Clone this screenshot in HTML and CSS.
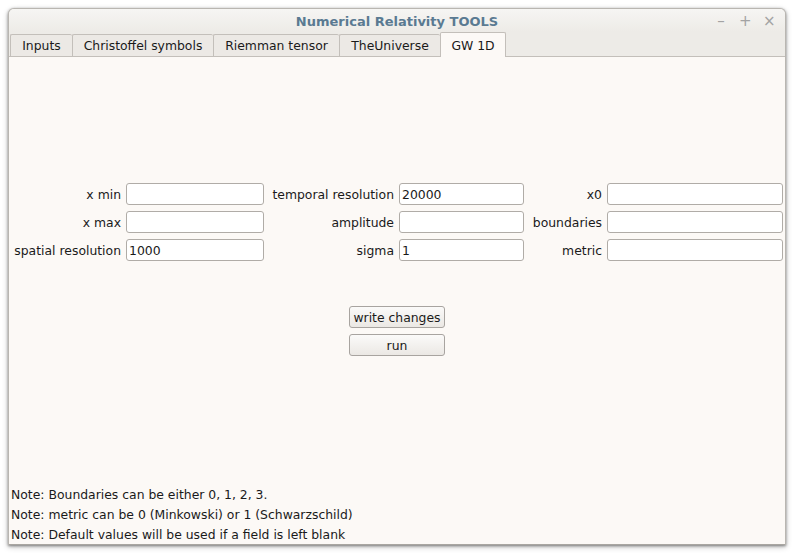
FILE: index.html
```html
<!DOCTYPE html>
<html>
<head>
<meta charset="utf-8">
<link rel="stylesheet" href="styles.css">
</head>
<body>
<div class="window">
  <div class="titlebar">
    <div class="title">Numerical Relativity TOOLS</div>
    <div class="controls">
      <span class="ctl">&#8211;</span>
      <span class="ctl">+</span>
      <span class="ctl">&#215;</span>
    </div>
  </div>
  <div class="tabs">
    <div class="tab t1">Inputs</div>
    <div class="tab t2">Christoffel symbols</div>
    <div class="tab t3">Riemman tensor</div>
    <div class="tab t4">TheUniverse</div>
    <div class="tab active t5">GW 1D</div>
  </div>
  <div class="content">
    <div class="form">
      <label class="lbl">x min</label><input class="field" type="text" value="">
      <label class="lbl">temporal resolution</label><input class="field" type="text" value="20000">
      <label class="lbl">x0</label><input class="field" type="text" value="">
      <label class="lbl">x max</label><input class="field" type="text" value="">
      <label class="lbl">amplitude</label><input class="field" type="text" value="">
      <label class="lbl">boundaries</label><input class="field" type="text" value="">
      <label class="lbl">spatial resolution</label><input class="field" type="text" value="1000">
      <label class="lbl">sigma</label><input class="field" type="text" value="1">
      <label class="lbl">metric</label><input class="field" type="text" value="">
    </div>
    <div class="buttons">
      <button class="btn">write changes</button>
      <button class="btn">run</button>
    </div>
    <div class="notes">
      <div class="note">Note: Boundaries can be either 0, 1, 2, 3.</div>
      <div class="note">Note: metric can be 0 (Minkowski) or 1 (Schwarzschild)</div>
      <div class="note">Note: Default values will be used if a field is left blank</div>
    </div>
  </div>
</div>
</body>
</html>
```
FILE: styles.css
```css
html, body {
  margin: 0;
  padding: 0;
  background: #ffffff;
}
body {
  font-family: "DejaVu Sans", sans-serif;
  font-size: 12.4px;
  color: #2e3436;
  padding: 8px 0 0 8px;
  width: 797px;
  height: 556px;
  box-sizing: border-box;
}
.window {
  width: 778px;
  height: 537px;
  display: flex;
  flex-direction: column;
  border-radius: 6px 6px 0 0;
  background: #edebe7;
  box-shadow: 0 1px 3px rgba(0,0,0,0.45), 0 2px 6px rgba(0,0,0,0.2);
  border: 1px solid #b9b6b1;
  border-bottom: none;
  box-sizing: border-box;
  overflow: hidden;
}
.titlebar {
  height: 23px;
  display: flex;
  align-items: center;
  justify-content: center;
  position: relative;
  background: linear-gradient(#f6f5f3, #edebe7);
  flex: none;
}
.title {
  font-weight: bold;
  color: #5a7a92;
  font-size: 13px;
  padding-top: 1px;
}
.controls {
  position: absolute;
  right: 10px;
  top: 3px;
  display: flex;
  gap: 12px;
  color: #a3a3a3;
  font-size: 15px;
}
.ctl {
  width: 12px;
  text-align: center;
}
.tabs {
  height: 24px;
  display: flex;
  align-items: flex-end;
  padding-left: 1px;
  flex: none;
  border-bottom: 1px solid #c3bfba;
}
.tab {
  height: 22px;
  display: flex;
  align-items: center;
  justify-content: center;
  background: #ece9e5;
  border: 1px solid #c3bfba;
  border-bottom: none;
  border-right: none;
  box-sizing: border-box;
  border-radius: 2px 2px 0 0;
  color: #1a1a1a;
}
.t1 { width: 62px; }
.t2 { width: 141px; }
.t3 { width: 126px; }
.t4 { width: 101px; }
.t5 {
  width: 66px;
  height: 25px;
  background: #fcf9f6;
  border-right: 1px solid #c3bfba;
  margin-bottom: -1px;
}
.content {
  flex: 1;
  background: #fcf9f6;
  display: flex;
  flex-direction: column;
  border-bottom: 1px solid #a9a6a1;
}
.form {
  display: grid;
  grid-template-columns: 111px 138px 125px 125px 73px 176px;
  column-gap: 5px;
  row-gap: 6px;
  margin-top: 126px;
  margin-left: 1px;
}
.lbl {
  display: flex;
  align-items: center;
  justify-content: flex-end;
  height: 22px;
  color: #1a1a1a;
  white-space: nowrap;
}
.field {
  height: 22px;
  box-sizing: border-box;
  border: 1px solid #b0aca7;
  border-radius: 3px;
  background: #ffffff;
  font-family: "DejaVu Sans", sans-serif;
  font-size: 12.4px;
  color: #1a1a1a;
  padding: 0 0 0 2px;
  margin: 0;
}
.buttons {
  display: flex;
  flex-direction: column;
  align-items: flex-start;
  gap: 6px;
  margin-top: 45px;
  margin-left: 340px;
}
.btn {
  width: 96px;
  height: 22px;
  box-sizing: border-box;
  border: 1px solid #a8a4a0;
  border-radius: 3px;
  background: linear-gradient(#fbfaf9, #ebe8e4);
  font-family: "DejaVu Sans", sans-serif;
  font-size: 12.4px;
  color: #1a1a1a;
  padding: 0;
  margin: 0;
}
.notes {
  margin-top: auto;
  margin-bottom: -1px;
  padding-left: 2px;
  display: flex;
  flex-direction: column;
}
.note {
  height: 20px;
  line-height: 20px;
  color: #1a1a1a;
}
```
